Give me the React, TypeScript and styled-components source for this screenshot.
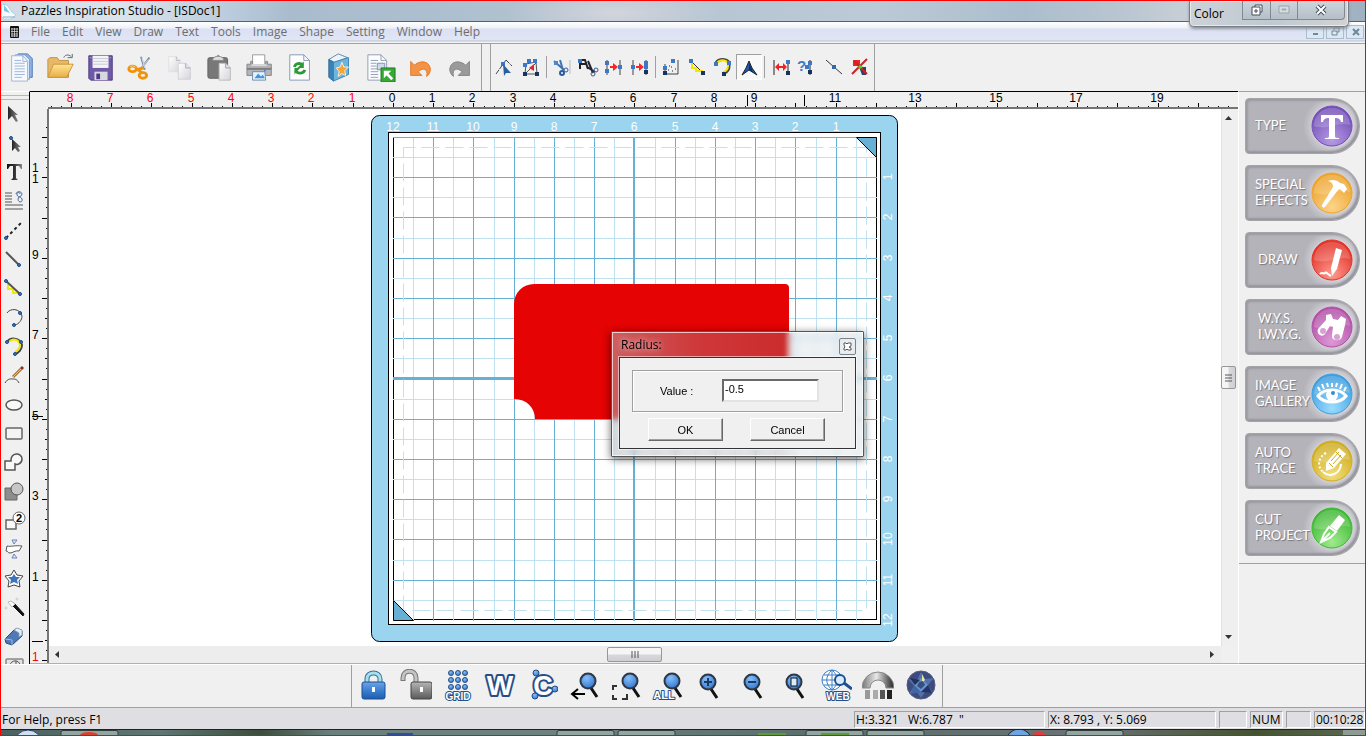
import React from "react";
import styled, { createGlobalStyle } from "styled-components";

const GlobalStyle = createGlobalStyle`
  * { box-sizing: border-box; }
  body { margin: 0; background: #f0f0f0; color: #000; font: 12px/16px "Open Sans", "Noto Sans", sans-serif; }
  button, input { font: inherit; color: inherit; margin: 0; }
`;

const UI = `"Liberation Sans", Arial, sans-serif`;

/* ---------- frame ---------- */
const Frame = styled.div`
  display: flex;
  flex-direction: column;
  height: 100vh;
  min-height: 480px;
  position: relative;
  overflow: hidden;
  border: 1px solid #f00;
  background: #f0f0f0;
`;
const TitleBar = styled.header`
  display: flex;
  align-items: center;
  gap: 4px;
  flex: none;
  height: 21px;
  border-bottom: 1px solid #5c6066;
  background:
    radial-gradient(ellipse 110px 26px at 45% 60%, #d3d5dc, transparent),
    radial-gradient(ellipse 80px 26px at 89% 60%, #c9d0d6, transparent),
    linear-gradient(90deg, #cfdae4 0, #dbe4ec 120px, #b9cbdd 230px, #a9bccd 290px, #b3c3d1 45%, #bccad7 64%, #abbdcd 75%, #c5cdd5 88%, #9fb0c0 100%);
`;
const TitleText = styled.h1`
  margin: 0;
  font-size: 12px;
  line-height: 16px;
  font-weight: 400;
`;
const MenuBar = styled.nav`
  display: flex;
  align-items: center;
  flex: none;
  height: 22px;
  padding: 0 1px 2px 8px;
  border-bottom: 1px solid #a0a0a0;
  background: linear-gradient(#fff 0, #eef1f8 6px, #dbe1f3 7px, #e1e6f6 18px, #b8c2d2 19px, #f5f5f5 20px);
`;
const MenuList = styled.div`
  display: flex;
  gap: 12px;
  padding-left: 9px;
`;
const MenuItem = styled.button`
  border: 0;
  padding: 0;
  background: none;
  color: #6d6d6d;
  font-size: 12px;
  line-height: 16px;
`;
const MdiButtons = styled.div`
  display: flex;
  gap: 2px;
  margin-left: auto;
`;
const MdiButton = styled.button`
  display: flex;
  align-items: center;
  justify-content: center;
  width: 18px;
  height: 14px;
  padding: 0;
  border: 1px solid #a9bdcc;
  background: #dce8f4;
`;

/* ---------- floating colour palette ---------- */
const Palette = styled.section`
  position: absolute;
  top: 0;
  right: 16px;
  display: flex;
  align-items: flex-start;
  width: 160px;
  height: 26px;
  padding: 0 3px 0 4px;
  border: 1px solid #777d84;
  border-top: 0;
  border-radius: 0 0 5px 5px;
  background: linear-gradient(90deg, #ccd2d7, #c0c9d1 50%, #d2d2d2);
  box-shadow: inset 0 0 0 1px #e6eaed, 0 2px 3px #8a8f96;
`;
const PaletteTitle = styled.h2`
  flex: 1;
  margin: 0;
  padding-top: 5px;
  font-size: 12px;
  line-height: 16px;
  font-weight: 400;
`;
const CaptionButton = styled.button<{ $w: number }>`
  display: flex;
  align-items: center;
  justify-content: center;
  width: ${(p) => p.$w}px;
  height: 19px;
  padding: 0;
  border: 1px solid #7f8a94;
  border-width: 0 0 1px 1px;
  background: linear-gradient(#cdd5db, #b4bfc8);
  &:last-child {
    border-right-width: 1px;
    border-bottom-right-radius: 4px;
  }
`;

/* ---------- top toolbars ---------- */
const Toolbar = styled.div`
  display: flex;
  flex: none;
  height: 47px;
`;
const ToolGroup = styled.div<{ $end?: boolean }>`
  display: flex;
  align-items: center;
  padding: 0 ${(p) => (p.$end ? 1 : 0)}px 2px;
  border-right: 1px solid #a0a0a0;
`;
const Grip = styled.div`
  width: 9px;
  border-right: 1px solid #a0a0a0;
`;
const ToolButton = styled.button<{ $w: number; $on?: boolean }>`
  display: flex;
  align-items: center;
  justify-content: center;
  flex: none;
  width: ${(p) => p.$w}px;
  height: 26px;
  padding: 0;
  overflow: visible;
  border: 1px solid ${(p) => (p.$on ? "#a0a0a0" : "transparent")};
  border-right-color: ${(p) => (p.$on ? "#fff" : "transparent")};
  border-bottom-color: ${(p) => (p.$on ? "#fff" : "transparent")};
  background: ${(p) => (p.$on ? "#f8f8f8" : "none")};
  svg { flex: none; }
`;
const Divider = styled.span`
  flex: none;
  width: 1px;
  height: 22px;
  margin: 0 2px;
  background: #a0a0a0;
`;

/* ---------- work area ---------- */
const Work = styled.main`
  display: flex;
  flex: 1;
  min-height: 0;
`;
const LeftTools = styled.aside`
  flex: none;
  width: 29px;
  padding-top: 9px;
  overflow: hidden;
  border-right: 1px solid #000;
  border-top: 1px solid #fff;
`;
const GripLines = styled.div`
  height: 5px;
  margin-top: -6px;
  border: 1px solid #b8b8b8;
  border-width: 1px 0;
`;
const LeftTool = styled.button`
  display: flex;
  align-items: center;
  justify-content: center;
  width: 25px;
  height: 29px;
  padding: 0;
  border: 0;
  background: none;
`;
const Doc = styled.section`
  display: flex;
  flex-direction: column;
  flex: 1;
  min-width: 0;
  border-top: 1px solid #000;
  border-bottom: 1px solid #b0b0b0;
`;
const TopRuler = styled.svg`
  display: block;
  flex: none;
  width: 100%;
  height: 17px;
  font: 12px ${UI};
`;
const DocGrid = styled.div`
  display: grid;
  grid-template-columns: 19px 1fr 17px;
  grid-template-rows: 1fr 17px;
  flex: 1;
  min-height: 0;
`;
const SideRuler = styled.svg`
  grid-row: 1 / 3;
  width: 19px;
  height: 100%;
  font: 12px ${UI};
`;
const Canvas = styled.div`
  position: relative;
  overflow: hidden;
  background: #fff;
`;
const MatSvg = styled.svg`
  position: absolute;
  left: 322px;
  top: 6px;
  font: 12px ${UI};
`;
const VScroll = styled.div`
  display: flex;
  flex-direction: column;
  align-items: center;
  justify-content: space-between;
  padding: 6px 3px 6px 0;
  border-left: 1px solid #e3e3e3;
  background: #efefef;
`;
const HScroll = styled.div`
  display: flex;
  align-items: center;
  justify-content: space-between;
  padding: 1px 6px 1px 5px;
  background: #ededed;
`;
const Thumb = styled.div<{ $v?: boolean }>`
  display: flex;
  align-items: center;
  justify-content: center;
  flex: none;
  width: ${(p) => (p.$v ? 15 : 55)}px;
  height: ${(p) => (p.$v ? 23 : 15)}px;
  border: 1px solid #979797;
  border-radius: 2px;
  background: linear-gradient(${(p) => (p.$v ? "90deg" : "180deg")}, #f5f5f5 45%, #d8d8dc 55%, #cfcfd3);
`;
const Corner = styled.div`
  background: #f0f0f0;
`;

/* ---------- dialog ---------- */
const Dialog = styled.form`
  position: absolute;
  left: 562px;
  top: 222px;
  width: 253px;
  padding: 0 7px 7px;
  border: 1px solid #555;
  border-radius: 1px;
  background: linear-gradient(90deg, rgba(180, 185, 190, 0.5) 0, rgba(160, 165, 170, 0.32) 90px, rgba(140, 150, 155, 0.28) 172px, rgba(225, 232, 236, 0.6) 184px);
  backdrop-filter: blur(3px);
  box-shadow: inset 0 0 0 1px rgba(255, 255, 255, 0.7), 0 2px 8px rgba(0, 0, 0, 0.6);
  font: 11px/14px ${UI};
`;
const DialogTitle = styled.div`
  display: flex;
  align-items: center;
  justify-content: space-between;
  height: 25px;
  padding-left: 2px;
  font: 12px/16px "Open Sans", "Noto Sans", sans-serif;
  text-shadow: 0 0 6px rgba(255, 255, 255, 0.9);
`;
const DialogClose = styled.button`
  display: flex;
  align-items: center;
  justify-content: center;
  width: 17px;
  height: 17px;
  margin-top: 4px;
  padding: 0;
  border: 1px solid #7b8288;
  border-radius: 2px;
  background: #e8ecee;
`;
const DialogBody = styled.div`
  padding: 12px 12px 7px;
  border: 1px solid #333;
  outline: 1px solid rgba(255, 255, 255, 0.55);
  background: #f0f0f0;
`;
const Field = styled.div`
  display: flex;
  align-items: center;
  gap: 29px;
  height: 42px;
  padding: 0 23px 2px 27px;
  border: 1px solid #a0a0a0;
  box-shadow: inset 1px 1px #fff, 1px 1px #fff;
`;
const FieldLabel = styled.label`
  flex: none;
  width: 33px;
  padding-top: 2px;
  white-space: nowrap;
`;
const FieldInput = styled.input`
  width: 98px;
  min-width: 0;
  height: 23px;
  padding: 0 1px 2px;
  border: 2px solid;
  border-color: #696969 #e3e3e3 #e3e3e3 #696969;
  background: #fff;
  outline: none;
`;
const Actions = styled.div`
  display: flex;
  justify-content: center;
  gap: 27px;
  padding: 6px 2px 0 0;
`;
const ActionButton = styled.button`
  width: 75px;
  height: 23px;
  padding: 0;
  border: 1px solid;
  border-color: #fff #696969 #696969 #fff;
  background: #f0f0f0;
  box-shadow: inset -1px -1px #a0a0a0;
`;

/* ---------- right panel ---------- */
const SidePanel = styled.aside`
  display: flex;
  flex-direction: column;
  flex: none;
  width: 127px;
  border-top: 1px solid #a0a0a0;
  border-left: 1px solid #fff;
  border-bottom: 1px solid #a0a0a0;
`;
const SideList = styled.div`
  display: flex;
  flex-direction: column;
  gap: 11px;
  padding: 6px 5px 7px 6px;
  border-bottom: 1px solid #a0a0a0;
`;
const SideButton = styled.button`
  display: flex;
  align-items: center;
  justify-content: space-between;
  height: 56px;
  padding: 0 6px 0 9px;
  border: 1px solid #a3a3a8;
  border-radius: 4px 28px 28px 4px;
  background: radial-gradient(circle at 87px 27px, #d9d9de 18px, #c4c3c9 24px, #b4b3ba 30px);
  box-shadow: inset 2px 2px 2px #9c9ba2, inset -2px -2px 2px #96959d;
  color: #fff;
  font: 13px/16px Lato, sans-serif;
  text-align: left;
  text-shadow: 1px 1px 1px #77767d;
  svg { flex: none; }
`;
const SideLabel = styled.span<{ $inset?: boolean }>`
  width: 50px;
  padding: 0 0 2px ${(p) => (p.$inset ? 3 : 0)}px;
  white-space: nowrap;
`;

/* ---------- bottom ---------- */
const ViewBar = styled.div`
  display: flex;
  flex: none;
  height: 44px;
  padding-left: 350px;
  border-top: 1px solid #fff;
  border-bottom: 1px solid #a0a0a0;
`;
const ViewGroup = styled.div`
  display: flex;
  align-items: center;
  padding: 0 1px 2px;
  border: 1px solid #a0a0a0;
  border-width: 0 1px;
`;
const StatusBar = styled.footer`
  display: flex;
  align-items: center;
  gap: 3px;
  flex: none;
  height: 21px;
  padding-top: 2px;
  background: #dfdee3;
`;
const StatusText = styled.div`
  flex: 1;
  padding-left: 1px;
`;
const StatusCell = styled.div<{ $w: number }>`
  width: ${(p) => p.$w}px;
  height: 17px;
  padding-left: 1px;
  border: 1px solid;
  border-color: #a0a0a0 #fff #fff #a0a0a0;
  font-size: 12px;
  line-height: 15px;
  white-space: pre;
  overflow: hidden;
`;
const Taskbar = styled.div`
  display: block;
  flex: none;
  height: 6px;
  border-top: 1px solid #222;
  background: linear-gradient(90deg, #4b6360 0, #5f7672 160px, #3b4d3c 260px, #6b807c 330px, #6d827e 40%, #5a6f6c 60%, #6a7274 80%, #44532f 92%, #5b6a55 100%);
  svg { display: block; }
`;

/* ---------- drawings ---------- */
type PicProps = { w?: number; h?: number; vb?: string; children: React.ReactNode };
const Pic = ({ w = 32, h = 32, vb, children }: PicProps) => (
  <svg width={w} height={h} viewBox={vb ?? `0 0 ${w} ${h}`} fill="none" aria-hidden="true">
    {children}
  </svg>
);

const HiddenSvg = styled.svg`
  position: absolute;
`;
const Defs = () => (
  <HiddenSvg width="0" height="0" aria-hidden="true">
    <defs>
      <linearGradient id="gBlue" x1="0" y1="0" x2="0" y2="1"><stop offset="0" stopColor="#6da6e4" /><stop offset="0.5" stopColor="#3a7fd0" /><stop offset="1" stopColor="#1f5cab" /></linearGradient>
      <radialGradient id="gLens" cx="0.4" cy="0.3" r="0.8"><stop offset="0" stopColor="#86bffb" /><stop offset="1" stopColor="#2a70c8" /></radialGradient>
      <linearGradient id="gPaper" x1="0" y1="0" x2="1" y2="1"><stop offset="0" stopColor="#fff" /><stop offset="1" stopColor="#d5d5dc" /></linearGradient>
      <linearGradient id="gGrey" x1="0" y1="0" x2="0" y2="1"><stop offset="0" stopColor="#b5b5b5" /><stop offset="1" stopColor="#5a5a5a" /></linearGradient>
      <linearGradient id="gGauge"><stop offset="0" stopColor="#777" /><stop offset="0.45" stopColor="#e8e8e8" /><stop offset="1" stopColor="#222" /></linearGradient>
      <linearGradient id="gFolder" x1="0" y1="0" x2="0" y2="1"><stop offset="0" stopColor="#ffe596" /><stop offset="1" stopColor="#e9ae45" /></linearGradient>
      <linearGradient id="gArrow" x1="0" y1="0" x2="1" y2="0"><stop offset="0" stopColor="#222" /><stop offset="1" stopColor="#888" /></linearGradient>
      <linearGradient id="gType" x1="0" y1="0" x2="1" y2="0"><stop offset="0" stopColor="#111" /><stop offset="0.5" stopColor="#333" /><stop offset="1" stopColor="#888" /></linearGradient>
    </defs>
  </HiddenSvg>
);

const fileTools: [string, React.ReactNode][] = [
  ["New", <>
    <path d="M13 2h10l5 5v20H13z" fill="#8fb4e8" stroke="#4b74b4" />
    <path d="M10 3h10l5 5v21H10z" fill="#e4effc" stroke="#7795c4" />
    <path d="M6 4h12l5 6v21H6z" fill="#f6faff" stroke="#9fb3d0" />
    <path d="M18 4v6h5M9 9h7M9 12h11M9 15h11M9 18h11M9 21h11M9 24h11M9 27h8" stroke="#9ab2d4" />
  </>],
  ["Open", <>
    <path d="M2 8l2-2h8l2 3h10v18H2z" fill="#e7b866" stroke="#c09045" />
    <path d="M8 13h21l-7 14H2z" fill="url(#gFolder)" stroke="#cd9438" />
    <path d="M19 6c1-3 5-4 8-1m1-3v4h-5" stroke="#55657a" />
  </>],
  ["Save", <>
    <path d="M3 4h25v26H5l-2-2z" fill="#6f5aa8" stroke="#4d3a86" />
    <path d="M7 4h17v13H7z" fill="#f4f4f6" />
    <path d="M7 7h17M7 10h17M7 13h17" stroke="#c9c9d2" />
    <path d="M9 21h14v9H9z" fill="#d8d8df" /><path d="M11 23h4v6h-4z" fill="#4d3a86" />
    <path d="M25 6h2M4 6h2" stroke="#a896d8" />
  </>],
  ["Cut", <>
    <path d="M16 5l4 14M25 6L15 19" stroke="#7d8ba2" strokeWidth="2" /><path d="M17 6l3 11M24 8l-8 9" stroke="#d7dfea" />
    <ellipse cx="7" cy="18" rx="4" ry="3" stroke="#f0930a" strokeWidth="3" /><ellipse cx="18" cy="25" rx="4" ry="3" stroke="#f0930a" strokeWidth="3" />
    <path d="M10 19l9-2M13 19l4 3" stroke="#f0930a" strokeWidth="3" /><path d="M4 16c1-1 4-2 6 0" stroke="#ffd071" />
  </>],
  ["Copy", <>
    <path d="M3 5h8l4 4v12H3z" fill="url(#gPaper)" stroke="#dedee2" /><path d="M11 5v4h4" stroke="#b8b8c0" />
    <path d="M13 12h8l5 5v12H13z" fill="url(#gPaper)" stroke="#cfcfd6" /><path d="M21 12v5h5" stroke="#a5a5b0" />
  </>],
  ["Paste", <>
    <rect x="2" y="6" width="21" height="22" rx="2" fill="#787878" stroke="#606060" /><path d="M7 9c0-6 12-6 12 0z" fill="#ddd" stroke="#888" />
    <circle cx="13" cy="4" r="1" fill="#888" />
    <path d="M14 12h7l5 5v13H14z" fill="url(#gPaper)" stroke="#bbb" /><path d="M21 12v5h5" stroke="#999" />
  </>],
  ["Print", <>
    <path d="M7 3h13v11H7z" fill="#fff" stroke="#999" /><path d="M1 13h4v-3h2v4h14v-4h2v3h4v12H1z" fill="#b4b4b7" stroke="#85858a" />
    <path d="M1 18h26" stroke="#7c7c80" strokeWidth="2" /><path d="M6 14h16" stroke="#dcdcde" strokeWidth="2" /><circle cx="20" cy="20" r="1" fill="#3a79d2" />
    <path d="M7 21h13l1 9H7z" fill="#e3f2ff" stroke="#6d8cab" /><path d="M9 28l4-5 3 3 2-2 2 4z" fill="#4b93d6" />
  </>],
  ["Refresh", <>
    <path d="M4 3h15l6 6v21H4z" fill="#fdfdff" stroke="#8198b5" /><path d="M19 3v6h6" stroke="#8198b5" />
    <path d="M9 16c1-4 6-5 9-2M20 19c-1 4-7 5-10 1" stroke="#2f9a35" strokeWidth="3" /><path d="M19 10v7h-7zM9 24v-7h6z" fill="#2f9a35" />
  </>],
  ["Library", <>
    <path d="M3 8l10-6 10 4-14 5z" fill="#eef5fa" stroke="#5c86a8" /><path d="M3 8l5 3v20l-5-4z" fill="#3b83b5" stroke="#2b6995" />
    <path d="M8 11l16-5v18L8 31z" fill="#6db5de" stroke="#3b83b5" />
    <path d="M17 11l2 5 5 0-4 4 1 5-4-2-4 3 1-5-3-4 4-1z" fill="#f6a53a" stroke="#fff1d6" />
  </>],
  ["Export", <>
    <path d="M2 3h14l6 6v21H2z" fill="#fdfdff" stroke="#8c9bb0" /><path d="M16 3v6h6M5 9h8M5 12h6M5 15h6M5 18h8M5 21h8M5 24h8M5 27h8" stroke="#8c9bb0" />
    <path d="M12 12h8v7h-8z" fill="#cdd8e8" stroke="#7c8ea8" /><path d="M16 17h15v15H16z" fill="#35a933" stroke="#1d7c1d" />
    <path d="M19 20h8l-3 3 5 5-2 2-5-5-3 3z" fill="#fff" />
  </>],
  ["Undo", <path d="M5 10l4 4c7-6 16-4 17 4 0 3-1 6-4 8 2-8-4-10-9-5l4 4H5z" fill="#f49245" stroke="#e37a25" />],
  ["Redo", <path d="M25 10l-4 4c-7-6-16-4-17 4 0 3 1 6 4 8-2-8 4-10 9-5l-4 4h12z" fill="#9a9a9a" stroke="#858585" />],
];

const dot = (x: number, y: number, c = "#3a78c8") => <rect x={x - 2} y={y - 2} width="4" height="4" fill={c} />;
const scissors = <><path d="M10 11l8 5M11 5l5 12" stroke="#223" strokeWidth="2" /><circle cx="16" cy="18" r="2" stroke="#3a5a86" /><circle cx="19" cy="14" r="2" stroke="#3a5a86" /></>;

type NodeTool = "|" | { name: string; on?: boolean; w?: number; art: React.ReactNode };
const nodeTools: NodeTool[] = [
  { name: "Edit node", art: <><path d="M2 18L12 4M12 4l6 6" stroke="#444" strokeDasharray="5 1" />{dot(9, 8)}<path d="M9 8l8 9-5 0-2 3z" fill="#27609f" /></> },
  { name: "Edit shape", art: <><path d="M5 18h12L16 6 6 8zM5 18L16 7" stroke="#555" />{dot(5, 18, "#17345e")}{dot(17, 18, "#17345e")}{dot(5, 9)}{dot(9, 5)}{dot(15, 5)}<path d="M14 8l-5 4 5 3z" fill="#e22" /></> },
  "|",
  { name: "Break path", art: <><path d="M3 5l10 9M9 4l3 10" stroke="#4274b2" strokeWidth="2" />{dot(5, 7, "#4e86cb")}<circle cx="11" cy="17" r="2" stroke="#2b5d9e" strokeWidth="2" /><circle cx="15" cy="14" r="2" stroke="#2b5d9e" /><path d="M19 4v14" stroke="#bbb" /></> },
  { name: "Cut shape", art: <><path d="M3 13V4h5l3 9M3 8h6" stroke="#222" strokeWidth="2" />{dot(3, 5)}{scissors}</> },
  { name: "Close path", art: <><path d="M4 4v15M17 4v15" stroke="#444" />{dot(4, 7)}{dot(4, 15)}{dot(17, 11)}<path d="M7 10h3V7l5 4-5 4v-3H7z" fill="#f22" /></> },
  { name: "Join nodes", art: <><path d="M4 4v15M17 4v15" stroke="#444" />{dot(4, 11)}{dot(17, 7)}{dot(17, 11)}{dot(17, 16, "#17345e")}<path d="M7 10h3V7l5 4-5 4v-3H7z" fill="#f22" /></> },
  "|",
  { name: "Reduce nodes", art: <><path d="M5 8v10h13V4" stroke="#444" />{dot(13, 5)}{dot(5, 12)}{dot(5, 17, "#17345e")}<path d="M8 14h1M11 11h1M12 15h1M15 13h1M9 10h1" stroke="#222" /></> },
  { name: "To line", art: <><path d="M5 5l12 12" stroke="#333" /><path d="M6 6v6h4v3h7" stroke="#f3e600" strokeWidth="2" />{dot(5, 5)}{dot(17, 17, "#17345e")}</> },
  { name: "To curve", art: <><path d="M4 7c3-5 15-5 13 3 0 4-2 6-5 7" stroke="#444" strokeWidth="3" /><path d="M5 7c3-4 12-4 11 3 0 3-2 5-4 6" stroke="#f3e600" strokeWidth="2" />{dot(4, 8)}{dot(17, 7)}{dot(12, 18, "#17345e")}</> },
  { name: "Corner node", on: true, w: 26, art: <><path d="M11 5l-3 7-4 7 7-5 8 5-5-7z" fill="#2059b0" stroke="#222" /><path d="M11 7v7l4 2z" fill="#0b2f66" /></> },
  "|",
  { name: "Align nodes", w: 27, art: <><path d="M4 4v15M18 4v15" stroke="#222" />{dot(18, 6)}{dot(18, 17, "#17345e")}<path d="M5 11l4-4v3h4V7l4 4-4 4v-3H9v3z" fill="#e22" /></> },
  { name: "Node properties", w: 27, art: <><text x="0" y="15" fontFamily="Liberation Sans, sans-serif" fontSize="15" fontWeight="700" fill="#3e7ac4">?</text><path d="M13 4v15" stroke="#222" />{dot(10, 11)}{dot(13, 7)}{dot(13, 16, "#17345e")}</> },
  { name: "Add node", art: <><path d="M3 4l16 14" stroke="#333" />{dot(11, 11, "#3369ab")}</> },
  { name: "Delete node", art: <><path d="M4 4h7v6H4z" fill="#e22" /><path d="M10 11h7v8h-4z" fill="#27456e" /><path d="M3 18L18 3M5 5l13 13" stroke="#c22" strokeWidth="2" /><path d="M9 11l2-2 3 2-3 2z" fill="#3d3" /></> },
];

const ball = (x: number, y: number) => <circle cx={x} cy={y} r="1.500" fill="#2f77cd" stroke="#1d4880" />;
const leftTools: [string, React.ReactNode][] = [
  ["Select", <path d="M7 4v14l4-4 4 6 2-1-3-6h3z" fill="url(#gArrow)" />],
  ["Edit", <><path d="M11 8v12l3-3 3 4 2-1-2-4h3z" fill="url(#gArrow)" />{ball(10, 7)}</>],
  ["Text", <path d="M6 4h15v5h-1l-2-3h-3v12l2 2h-7l2-2V6H9L7 9H6z" fill="url(#gType)" />],
  ["Text on path", <><path d="M4 4h7M4 7h7M4 10h7M4 13h7M4 16h18M4 20h18" stroke="#555" /><path d="M15 5c0-3 6-3 6 0 0 3-4 2-4 5 0 4 5 4 4 0-1-3-5-1-5-5 0-2 3-2 3 0" stroke="#4a6aa0" /></>],
  ["Dotted line", <><path d="M5 20L21 4" stroke="#222" strokeWidth="2" strokeDasharray="3 3" />{ball(5, 20)}</>],
  ["Line", <><path d="M5 5l13 13" stroke="#555" strokeWidth="2" />{ball(18, 18)}</>],
  ["Freehand line", <><path d="M7 8v5h5v4h6" stroke="#f3e600" strokeWidth="2" /><path d="M5 5l14 13" stroke="#555" strokeWidth="2" />{ball(5, 5)}{ball(19, 18)}</>],
  ["Arc", <><path d="M6 8c3-5 13-5 15 3 0 4-3 8-7 9" stroke="#444" />{ball(19, 8)}{ball(13, 20)}</>],
  ["Curve", <><path d="M6 8c3-5 13-5 15 3 0 4-3 8-7 9" stroke="#444" strokeWidth="2" /><path d="M8 8c3-4 10-3 11 3 0 3-2 5-5 7" stroke="#f3e600" strokeWidth="2" />{ball(6, 8)}{ball(20, 8)}{ball(14, 20)}</>],
  ["Pencil", <><path d="M12 14l8-8" stroke="#a8752a" strokeWidth="3" /><path d="M12 14l8-8" stroke="#f4c553" /><path d="M20 6l2-2" stroke="#8b2f2f" strokeWidth="3" /><path d="M4 20c3-5 6-4 8-4s4 0 6 4" stroke="#444" /></>],
  ["Ellipse", <ellipse cx="13" cy="13" rx="8" ry="5" stroke="#555" strokeWidth="1.500" fill="#f8f8f8" />],
  ["Rectangle", <rect x="5" y="7" width="16" height="11" rx="1" stroke="#666" strokeWidth="1.500" fill="#f4f4f4" />],
  ["Weld", <path d="M4 11h6c-1-9 11-9 11-2 0 5-5 6-7 5v6H4z" stroke="#555" fill="#f8f8f8" strokeWidth="1.500" />],
  ["Intersect", <><path d="M4 9h12v12H4z" fill="#8d8d8d" stroke="#666" /><circle cx="16" cy="10" r="6" fill="#c6c6c6" stroke="#555" /></>],
  ["Group", <><path d="M5 12h10v9H5z" stroke="#666" strokeWidth="1.500" fill="#f8f8f8" /><circle cx="18" cy="10" r="6" fill="#fff" stroke="#666" /><text x="15" y="14" fontFamily="Liberation Sans, sans-serif" fontSize="11" fontWeight="700" fill="#000">2</text></>],
  ["Flip", <><path d="M6 9c4 1 8-1 15 0l-3 5c-4-1-6 2-9 2s-1-2-4-2z" fill="#fff" stroke="#555" /><path d="M11 3h5l-3 4zM11 21h5l-3-4z" fill="#dde9ff" stroke="#6a83b5" /></>],
  ["Star", <><path d="M13 4l3 5 6 1-4 5 1 6-6-2-6 2 1-6-4-5 6-1z" fill="#fff" stroke="#444" /><path d="M13 8l2 3 4 0-3 3 1 4-4-2-4 2 1-4-3-3 4 0z" fill="#3c74bd" /></>],
  ["Magic wand", <><path d="M10 9l3-1 10 11-1 2z" fill="#111" stroke="#111" /><path d="M7 7l3-1 4 3-3 3z" fill="#fff" stroke="#bbb" /><circle cx="16" cy="4" r="1" stroke="#ccc" /><circle cx="5" cy="13" r="1" stroke="#ccc" /></>],
  ["Eraser", <><path d="M4 15L14 5l7 2v5L11 21l-6-2z" fill="#4d79b6" stroke="#27497c" /><path d="M13 6l3-2 5 2v5l-3 2V9z" fill="#e9eff7" stroke="#8aa0bd" /><path d="M4 15l7 1v5" stroke="#9bbce6" /></>],
  ["Shapes", <><rect x="5" y="6" width="17" height="15" rx="1" stroke="#888" fill="#e4e4e4" strokeWidth="1.500" /><path d="M9 12c1-5 9-6 10 0M15 12V8" stroke="#555" /></>],
];

const lens = (mark?: React.ReactNode) => (
  <><path d="M20 19l6 9" stroke="#111" strokeWidth="3" /><circle cx="17" cy="12" r="7.500" fill="url(#gLens)" stroke="#2e3745" strokeWidth="2" />{mark}</>
);
const tag = (s: string, x: number, y: number, size: number) => (
  <text x={x} y={y} textAnchor="middle" fontFamily="Liberation Sans, sans-serif" fontSize={size} fontWeight="700" fill="#fff" stroke="#254e86" strokeWidth={size > 12 ? 4 : 2} strokeLinejoin="round" paintOrder="stroke">{s}</text>
);
const viewTools: [string, React.ReactNode][] = [
  ["Lock", <><path d="M9 15v-5c0-8 13-8 13 0v5" stroke="#3a6f92" strokeWidth="5" /><path d="M9 15v-5c0-8 13-8 13 0v5" stroke="#a6dff0" strokeWidth="3" /><rect x="4" y="13" width="23" height="17" rx="2" fill="url(#gBlue)" stroke="#1c4d92" /><rect x="14" y="18" width="3" height="5" fill="#fff" /></>],
  ["Unlock", <><path d="M3 12V9c0-9 13-9 13 0v5" stroke="#777" strokeWidth="5" /><path d="M3 11V9c0-9 13-9 13 0v5" stroke="#c4c4c4" strokeWidth="3" /><rect x="11" y="13" width="21" height="17" rx="2" fill="url(#gGrey)" stroke="#444" /><rect x="20" y="18" width="3" height="5" fill="#fff" /></>],
  ["Grid", <>{[4, 11, 18].map((y) => [9, 16, 23].map((x) => <circle key={`${x}-${y}`} cx={x} cy={y} r="2.500" fill="url(#gLens)" stroke="#2b4f80" />))}{tag("GRID", 16, 31, 10)}</>],
  ["Weld view", tag("W", 16, 26, 28)],
  ["Curve view", <>{tag("C", 17, 26, 27)}{[[10, 4], [29, 20], [9, 27]].map(([x, y]) => <circle key={x} cx={x} cy={y} r="3" fill="url(#gLens)" stroke="#2b4f80" />)}</>],
  ["Zoom previous", <><g transform="translate(3 0)">{lens()}</g><path d="M17 25H4m6-5l-6 5 6 5" stroke="#000" strokeWidth="2" /></>],
  ["Zoom region", <><g transform="translate(3 0)">{lens()}</g><path d="M3 21v-4h4M3 26v4h4M12 30h5v-5" stroke="#333" strokeWidth="2" /></>],
  ["Zoom all", <><g transform="translate(3 0)">{lens()}</g>{tag("ALL", 12, 30, 11)}</>],
  ["Zoom in", <g transform="translate(-3 1)">{lens(<path d="M13 12h8M17 8v8" stroke="#183a66" strokeWidth="2" />)}</g>],
  ["Zoom out", <g transform="translate(-1 1)">{lens(<path d="M13 12h8" stroke="#183a66" strokeWidth="2" />)}</g>],
  ["Zoom page", <g transform="translate(-1 1)">{lens(<rect x="14" y="8" width="6" height="8" fill="#dcecff" stroke="#111" />)}</g>],
  ["Web", <><circle cx="12" cy="11" r="10" fill="#fff" stroke="#3d7fc4" /><path d="M2 11h20M4 6h16M4 16h16M12 1v20M12 1c-7 6-7 14 0 20M12 1c7 6 7 14 0 20" stroke="#3d7fc4" /><path d="M24 14l8 6" stroke="#1e4f91" strokeWidth="3" /><circle cx="20" cy="11" r="5" fill="#d7ecff" stroke="#1e4f91" strokeWidth="2" />{tag("WEB", 18, 31, 10)}</>],
  ["Pressure", <><path d="M0 19a16 16 0 0 1 32 0h-8a8 8 0 0 0-16 0z" fill="url(#gGauge)" stroke="#888" /><path d="M3 21h5v9H3z" fill="#999" /><path d="M11 21h5v9h-5z" fill="#aaa" /><path d="M18 21h5v9h-5z" fill="#555" /><path d="M25 21h5v9h-5z" fill="#222" /></>],
  ["Rhinestone", <><circle cx="17" cy="16" r="14" fill="#3c4c80" stroke="#565c78" /><path d="M17 3l4 7 9-1-6 7 5 8-8-1-4 6-4-6-8 2 5-8-6-7 9 1z" fill="#5370a8" /><path d="M17 9l7 7-7 7-7-7z" fill="#6c93cc" /><path d="M18 5l3 6-3 3z" fill="#e6e8a0" /><path d="M6 9l10 2-5 5z" fill="#24305c" /><path d="M17 23l7-7 4 8z" fill="#253468" /><path d="M10 16l7 7-10 2z" fill="#3e66a8" /><path d="M15 13l4-1 2 4-4 4-4-3z" fill="#33507f" /></>],
];

const Badge = ({ id, hi, lo, children }: { id: string; hi: string; lo: string; children: React.ReactNode }) => (
  <Pic w={42} h={42}>
    <defs><radialGradient id={id} cx="0.5" cy="0.85" r="0.9"><stop offset="0" stopColor={hi} /><stop offset="0.8" stopColor={lo} /></radialGradient></defs>
    <circle cx="21" cy="21" r="20" fill={`url(#${id})`} stroke={lo} />
    <path d="M3 21C3 10 11 3 21 3s18 7 18 17c-12-4-22 6-36 1z" fill="#fff" opacity="0.18" />
    {children}
  </Pic>
);
const sideItems: { lines: string[]; inset?: boolean; art: React.ReactNode }[] = [
  { lines: ["TYPE"], art: <Badge id="bType" hi="#b69be4" lo="#7550b8"><path d="M10 10h22v7h-2c-1-3-2-4-6-4v18c0 2 1 2 4 2v1H14v-1c3 0 4 0 4-2V13c-4 0-5 1-6 4h-2z" fill="#fff" /></Badge> },
  { lines: ["SPECIAL", "EFFECTS"], art: <Badge id="bFx" hi="#fcd48a" lo="#eda42e"><path d="M17 9c5-2 9-1 12 2l4 1 3 5-3 4-4-4-2 1-13 17c-1 1-4 0-3-2l11-18c0-3-1-5-5-6z" fill="#fff" /></Badge> },
  { lines: ["DRAW"], inset: true, art: <Badge id="bDraw" hi="#ff9a90" lo="#e23428"><path d="M25 9l6 2-5 19-5 7-1-8z" fill="#fff" /><path d="M9 35c2-3 4 1 5-1s3 2 6 3" stroke="#fff" strokeWidth="2" /></Badge> },
  { lines: ["W.Y.S.", "I.W.Y.G."], inset: true, art: <Badge id="bWys" hi="#dd9ad6" lo="#b350a8"><path d="M15 9l5-1 2 5 5 1 3-4 5 3-1 6-3 12c-2 5-11 4-10-2l1-8-3-1-5 8c-3 4-9 0-7-5l8-9z" fill="#fff" /><circle cx="12" cy="25" r="3" fill="#d9a0d4" /><circle cx="26" cy="31" r="3" fill="#d9a0d4" /></Badge> },
  { lines: ["IMAGE", "GALLERY"], art: <Badge id="bImg" hi="#9adcff" lo="#3f9fe0"><path d="M7 23c6-8 22-8 28 0-6 8-22 8-28 0z" stroke="#fff" strokeWidth="3" /><circle cx="21" cy="22" r="6" fill="#fff" /><circle cx="22" cy="20" r="2" fill="#2f8fd4" /><path d="M9 18l-2-4M13 16l-2-5M17 14l-1-4M21 14v-4M25 14l1-4M29 16l2-5M33 18l2-4" stroke="#fff" strokeWidth="2" /></Badge> },
  { lines: ["AUTO", "TRACE"], art: <Badge id="bTrace" hi="#f2de7c" lo="#d0ae22"><path d="M15 23L28 8l7 6-12 14-8 3z" fill="#fff" /><path d="M18 23l4 4M25 12l6 6M20 21l8-9M22 24l8-9" stroke="#cfa91d" /><path d="M15 13c-8 4-9 14-3 19" stroke="#fff" strokeWidth="2" strokeDasharray="2 2" /><path d="M12 32c7 6 17 2 18-8" stroke="#fff" strokeWidth="2" /></Badge> },
  { lines: ["CUT", "PROJECT"], art: <Badge id="bCut" hi="#a0ea8d" lo="#40b936"><path d="M28 8l6 5-8 11-7-5z" fill="#fff" /><path d="M18 20l7 5-6 6-9 4 3-8z" stroke="#fff" strokeWidth="2" /><path d="M10 35l9-9" stroke="#fff" strokeWidth="2" /></Badge> },
];

const UNIT = 40.25;
const range = (a: number, b: number) => Array.from({ length: b - a + 1 }, (_, i) => a + i);
const snap = (v: number) => Math.ceil(v - 0.5);

const RulerTop = () => (
  <TopRuler role="img" aria-label="Horizontal ruler">
    {range(-34, 83).map((q) => {
      const len = q % 4 === 0 ? 4 : 1;
      return <rect key={q} x={snap(363 + (q * UNIT) / 4)} y={15 - len} width="1" height={len} fill="#000" />;
    })}
    {[...range(-8, 9), 11, 13, 15, 17, 19].map((n) => (
      <text key={n} x={snap(362 + n * UNIT)} y="10" textAnchor="middle" fill={n < 0 ? "#f00" : "#000"}>{Math.abs(n)}</text>
    ))}
    <path d="M717.500 3v11M774.500 3v11" stroke="#000" />
    <rect x="18" y="15" width="100%" height="2" fill="#757575" />
  </TopRuler>
);

const RulerSide = () => (
  <SideRuler role="img" aria-label="Vertical ruler">
    {range(-5, 49).map((q) => {
      const len = q % 4 === 0 ? 5 : q % 2 === 0 ? 2 : 1;
      return <rect key={q} x={17 - len} y={Math.round(511 - (q * UNIT) / 4)} width={len} height="1" fill="#000" />;
    })}
    <text><tspan x="2" y="63">1</tspan><tspan x="2" y="74">1</tspan></text>
    {[9, 7, 5, 3, 1].map((n) => <text key={n} x="2" y={Math.round(512 - n * UNIT)}>{n}</text>)}
    <text x="2" y="552" fill="#f00">1</text>
    <path d="M2 307.500h11M2 532.500h11" stroke="#000" />
    <rect x="17" y="0" width="2" height="100%" fill="#757575" />
  </SideRuler>
);

const Mat = () => {
  const at = (n: number) => snap(22 + n * UNIT) + 0.5;
  return (
    <MatSvg width="527" height="527" role="img" aria-label="Cutting mat">
      <rect x="0.5" y="0.5" width="526" height="526" rx="8" fill="#9bd4ee" stroke="#000" />
      <rect x="17.500" y="17.500" width="492" height="492" fill="#fff" stroke="#000" />
      <path d="M22.500 22v483M22 504.500h484M505.500 22v483" stroke="#000" />
      {range(0, 11).map((n) => <path key={`l${n}`} d={`M${at(n + 0.5)} 22v484M22 ${at(n + 0.5)}h484`} stroke="#bfe1f0" />)}
      {range(1, 11).filter((n) => n !== 6).map((n) => <path key={`d${n}`} d={`M${at(n)} 22v484M22 ${at(n)}h484`} stroke="#67afd3" />)}
      <path d="M22 22.500h484" stroke="#67afd3" />
      <path d="M263 22v484" stroke="#67afd3" strokeWidth="2" />
      <path d="M22 263.500h484" stroke="#67afd3" strokeWidth="3" />
      <rect x="32.500" y="32.500" width="463" height="463" fill="none" stroke="#bfe1f0" strokeDasharray="18 6" strokeDashoffset="6" />
      <path d="M22.500 485.500v20h20z" fill="#67afd3" stroke="#000" />
      <path d="M485.500 22.500h20v20z" fill="#67afd3" stroke="#000" />
      <g fill="#fff" textAnchor="middle">
        {range(1, 12).map((n) => <text key={`t${n}`} x={snap(22 + (12 - n) * UNIT)} y="16">{n}</text>)}
        {range(1, 12).map((n) => <text key={`r${n}`} transform={`translate(521 ${snap(22 + n * UNIT)}) rotate(-90)`}>{n}</text>)}
      </g>
      <path d="M143 189a20 20 0 0 1 20-20h251a4 4 0 0 1 4 4v131H164a20 20 0 0 0-20-20h-1z" fill="#e50303" />
    </MatSvg>
  );
};

const Arrow = ({ d }: { d: string }) => <Pic w={7} h={7}><path d={d} fill="#333" /></Pic>;

export default function App() {
  return (
    <Frame>
      <GlobalStyle />
      <Defs />
      <TitleBar>
        <Pic w={16} h={18}><path d="M1 2l5 1 5 7 4 3-5 4H3l-3-3z" fill="#f3fbff" stroke="#a9d3e4" /><path d="M3 3l6 8-6-2z" fill="#7cc6e4" /><path d="M2 15h12" stroke="#8fa9b8" /></Pic>
        <TitleText>Pazzles Inspiration Studio - [ISDoc1]</TitleText>
      </TitleBar>
      <MenuBar>
        <Pic w={13} h={14}><rect x="1" y="1" width="9" height="12" rx="1" fill="#111" /><path d="M3 3v9M5.500 3v9M8 3v9M2 4h7M2 6.500h7M2 9h7M2 11h7" stroke="#eee" strokeWidth="0.7" /></Pic>
        <MenuList>
          {["File", "Edit", "View", "Draw", "Text", "Tools", "Image", "Shape", "Setting", "Window", "Help"].map((m) => <MenuItem key={m} type="button">{m}</MenuItem>)}
        </MenuList>
        <MdiButtons>
          <MdiButton type="button" aria-label="Minimize document"><Pic w={9} h={9}><path d="M2 7h5" stroke="#6f8799" strokeWidth="2" /></Pic></MdiButton>
          <MdiButton type="button" aria-label="Restore document"><Pic w={9} h={9}><path d="M3 3V1h5v4H6M1 4h5v4H1z" stroke="#6f8799" /></Pic></MdiButton>
          <MdiButton type="button" aria-label="Close document"><Pic w={9} h={9}><path d="M2 2l6 6M8 2L2 8" stroke="#6f8799" strokeWidth="2" /></Pic></MdiButton>
        </MdiButtons>
      </MenuBar>
      <Palette aria-label="Color palette">
        <PaletteTitle>Color</PaletteTitle>
        <CaptionButton $w={28} type="button" aria-label="Restore"><Pic w={12} h={12}><path d="M4 3V1h7v7H9M1 3h8v8H1zM4 6h2v2H4z" stroke="#454f5c" fill="#fff" /></Pic></CaptionButton>
        <CaptionButton $w={27} type="button" aria-label="Maximize" disabled><Pic w={12} h={12}><path d="M1 2h10v7H1zM4 5h4v1H4z" stroke="#99a2aa" fill="#d7dde1" /></Pic></CaptionButton>
        <CaptionButton $w={48} type="button" aria-label="Close"><Pic w={12} h={12}><path d="M2 2l8 8M10 2l-8 8" stroke="#454f5c" strokeWidth="4" /><path d="M2 2l8 8M10 2l-8 8" stroke="#fff" strokeWidth="2" /></Pic></CaptionButton>
      </Palette>

      <Toolbar>
        <ToolGroup>
          {fileTools.map(([name, art]) => <ToolButton key={name} $w={40} type="button" aria-label={name}><Pic w={30} h={30} vb="0 0 32 32">{art}</Pic></ToolButton>)}
        </ToolGroup>
        <Grip />
        <ToolGroup $end>
          {nodeTools.map((t, i) => t === "|" ? <Divider key={i} /> : (
            <ToolButton key={t.name} $w={t.w ?? 26} $on={t.on} type="button" aria-label={t.name}><Pic w={22} h={22}>{t.art}</Pic></ToolButton>
          ))}
        </ToolGroup>
      </Toolbar>

      <Work>
        <LeftTools>
          <GripLines />
          {leftTools.map(([name, art]) => <LeftTool key={name} type="button" aria-label={name}><Pic w={25} h={25}>{art}</Pic></LeftTool>)}
        </LeftTools>
        <Doc>
          <RulerTop />
          <DocGrid>
            <RulerSide />
            <Canvas>
              <Mat />
              <Dialog onSubmit={(e) => e.preventDefault()}>
                <DialogTitle>
                  Radius:
                  <DialogClose type="button" aria-label="Close dialog"><Pic w={9} h={9}><path d="M1 1h2l1 1 1-1h3v3L6 5l2 1v2H5L4 7 3 8H1V6l1-1-1-2z" fill="#fff" stroke="#555" /></Pic></DialogClose>
                </DialogTitle>
                <DialogBody>
                  <Field>
                    <FieldLabel htmlFor="radius">Value :</FieldLabel>
                    <FieldInput id="radius" type="text" defaultValue="-0.5" />
                  </Field>
                  <Actions>
                    <ActionButton type="submit">OK</ActionButton>
                    <ActionButton type="button">Cancel</ActionButton>
                  </Actions>
                </DialogBody>
              </Dialog>
            </Canvas>
            <VScroll>
              <Arrow d="M0 5l3.500-4L7 5z" />
              <Thumb $v><Pic w={7} h={8}><path d="M0 1h7M0 4h7M0 7h7" stroke="#555" /></Pic></Thumb>
              <Arrow d="M0 2l3.500 4L7 2z" />
            </VScroll>
            <HScroll>
              <Arrow d="M5 0L1 3.500 5 7z" />
              <Thumb><Pic w={8} h={7}><path d="M1 0v7M4 0v7M7 0v7" stroke="#555" /></Pic></Thumb>
              <Arrow d="M2 0l4 3.500L2 7z" />
            </HScroll>
            <Corner />
          </DocGrid>
        </Doc>
        <SidePanel>
          <SideList>
            {sideItems.map(({ lines, inset, art }) => (
              <SideButton key={lines[0]} type="button">
                <SideLabel $inset={inset}>{lines.map((l, i) => <React.Fragment key={l}>{i > 0 && <br />}{l}</React.Fragment>)}</SideLabel>
                {art}
              </SideButton>
            ))}
          </SideList>
        </SidePanel>
      </Work>

      <ViewBar>
        <ViewGroup>
          {viewTools.map(([name, art]) => <ToolButton key={name} $w={42} type="button" aria-label={name}><Pic>{art}</Pic></ToolButton>)}
        </ViewGroup>
      </ViewBar>
      <StatusBar>
        <StatusText>For Help, press F1</StatusText>
        <StatusCell $w={191}>{'H:3.321   W:6.787  "'}</StatusCell>
        <StatusCell $w={168}>X: 8.793 , Y: 5.069</StatusCell>
        <StatusCell $w={28} />
        <StatusCell $w={33}>NUM</StatusCell>
        <StatusCell $w={25} />
        <StatusCell $w={51}>00:10:28</StatusCell>
      </StatusBar>
      <Taskbar>
        <svg width="100%" height="5" aria-hidden="true">
          {[60, 556, 617, 805, 866, 1065].map((x) => <rect key={x} x={x} y="0.5" width="57" height="8" rx="2" fill="#93a5a1" stroke="#2f3d3a" />)}
          <circle cx="27" cy="14" r="14" fill="#cfe0f2" stroke="#25405f" />
          <ellipse cx="88" cy="5" rx="9" ry="3" fill="#d9402f" />
          <rect x="386" y="3" width="26" height="4" fill="#2e4f9e" />
          <rect x="757" y="3" width="28" height="4" fill="#5d9b35" />
          <rect x="820" y="3" width="28" height="4" fill="#5d9b35" />
          <circle cx="1018" cy="12" r="13" fill="#6ea4e0" stroke="#222" />
          <circle cx="1038" cy="8" r="7" fill="#e23b3b" />
          <rect x="1342" y="0" width="22" height="6" fill="#8e9a94" />
        </svg>
      </Taskbar>
    </Frame>
  );
}
